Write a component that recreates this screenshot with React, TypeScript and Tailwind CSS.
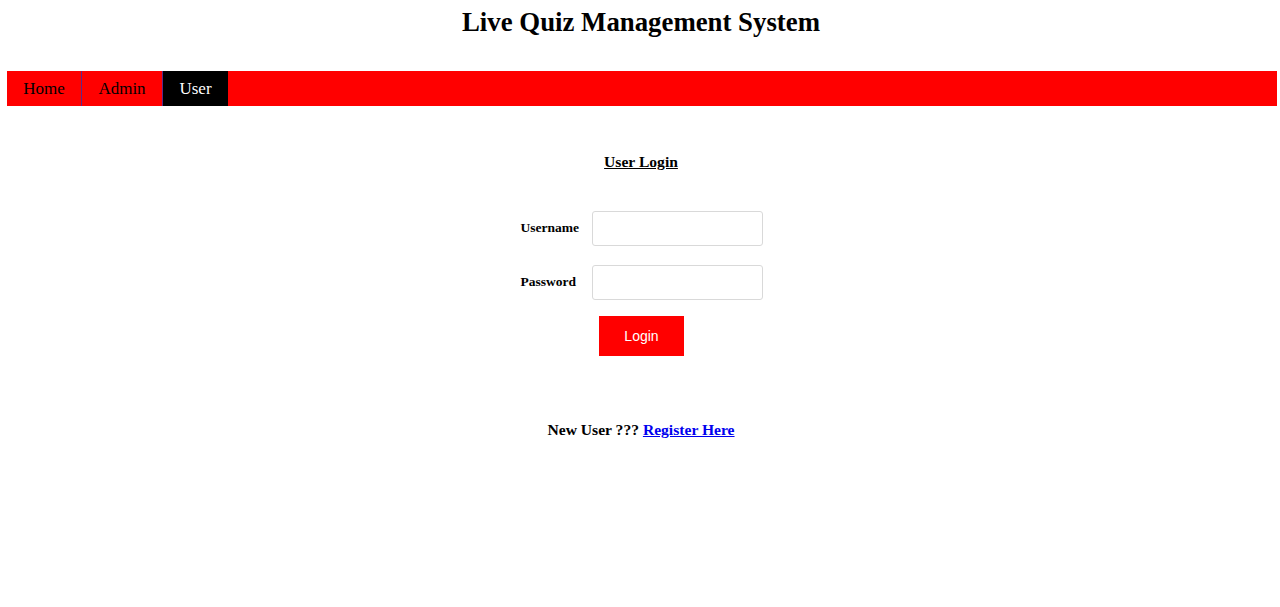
import { useState } from "react"

export default function App() {
  const [username, setUsername] = useState("")
  const [password, setPassword] = useState("")

  const navLinks = [
    { label: "Home", active: false, w: "w-[74px]" },
    { label: "Admin", active: false, w: "w-[81px]" },
    { label: "User", active: true, w: "w-[66px]" },
  ]

  return (
    <div className="min-h-[607px] bg-white px-[7px] text-black" style={{ fontFamily: '"Liberation Serif", "Times New Roman", serif' }}>
      {/* Title */}
      <h2 className="ml-[2px] pt-[6px] text-center text-[26.8px] font-bold leading-[33px]">Live Quiz Management System</h2>

      {/* Navigation */}
      <nav className="mt-[32px] flex h-[35px] w-[1270px] bg-[#ff0000]">
        {navLinks.map((link, i) => (
          <a
            key={link.label}
            href="#"
            className={`flex h-full items-center justify-center pt-[1px] text-[17px] ${link.w} ${
              link.active ? "bg-black text-white" : "text-black"
            } ${i > 0 ? "border-l border-[#5a2a8a]" : ""}`}
          >
            {link.label}
          </a>
        ))}
      </nav>

      {/* Login form */}
      <div className="flex flex-col items-center">
        <h3 className="ml-[2px] mt-[47px] text-[15.6px] font-bold leading-[18px] underline">User Login</h3>

        <form className="mt-[40px] flex flex-col items-center" onSubmit={(e) => e.preventDefault()}>
          <div className="ml-[3px] flex items-center">
            <label className="w-[71px] text-[13.5px] font-bold">Username</label>
            <input
              value={username}
              onChange={(e) => setUsername(e.target.value)}
              className="h-[35px] w-[171px] rounded-[3px] border border-[#d9d9d9] px-2 outline-none"
            />
          </div>
          <div className="ml-[3px] mt-[19px] flex items-center">
            <label className="w-[71px] text-[13.5px] font-bold">Password</label>
            <input
              type="password"
              value={password}
              onChange={(e) => setPassword(e.target.value)}
              className="h-[35px] w-[171px] rounded-[3px] border border-[#d9d9d9] px-2 outline-none"
            />
          </div>
          <button
            type="submit"
            className="ml-[3px] mt-[16px] h-[40px] w-[85px] bg-[#ff0000] text-[14px] text-white"
            style={{ fontFamily: '"Liberation Sans", Arial, sans-serif' }}
          >
            Login
          </button>
        </form>

        <p className="ml-[2px] mt-[62px] text-[15.6px] font-bold">
          New User ???{" "}
          <a href="#" className="text-[#0000ee] underline">
            Register Here
          </a>
        </p>
      </div>
    </div>
  )
}
